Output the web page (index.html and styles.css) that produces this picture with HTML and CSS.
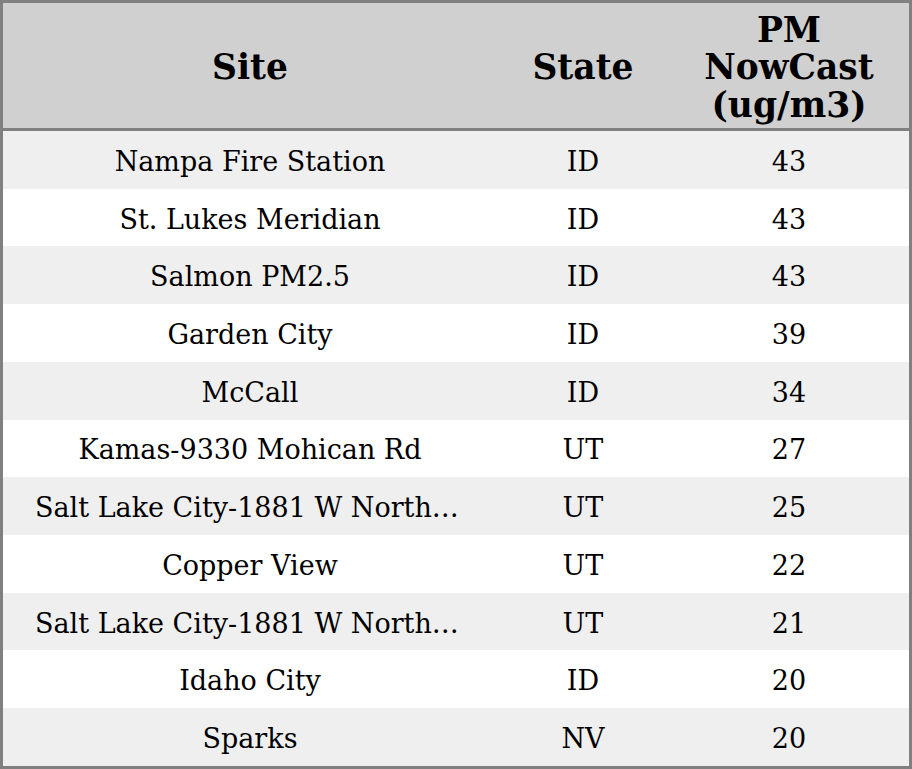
FILE: index.html
```html
<!DOCTYPE html>
<html>
<head>
<meta charset="utf-8">
<link rel="stylesheet" href="styles.css">
</head>
<body>
<div class="frame">
<table class="grid">
<colgroup><col class="c-site"><col class="c-state"><col class="c-pm"></colgroup>
<thead>
<tr><th>Site</th><th>State</th><th>PM NowCast (ug/m3)</th></tr>
</thead>
<tbody>
<tr><td>Nampa Fire Station</td><td>ID</td><td>43</td></tr>
<tr><td>St. Lukes Meridian</td><td>ID</td><td>43</td></tr>
<tr><td>Salmon PM2.5</td><td>ID</td><td>43</td></tr>
<tr><td>Garden City</td><td>ID</td><td>39</td></tr>
<tr><td>McCall</td><td>ID</td><td>34</td></tr>
<tr><td>Kamas-9330 Mohican Rd</td><td>UT</td><td>27</td></tr>
<tr><td>Salt Lake City-1881 W Northtemple</td><td>UT</td><td>25</td></tr>
<tr><td>Copper View</td><td>UT</td><td>22</td></tr>
<tr><td>Salt Lake City-1881 W Northtemple</td><td>UT</td><td>21</td></tr>
<tr><td>Idaho City</td><td>ID</td><td>20</td></tr>
<tr><td>Sparks</td><td>NV</td><td>20</td></tr>
</tbody>
</table>
</div>
</body>
</html>
```

FILE: styles.css
```css
html, body {
  margin: 0;
  padding: 0;
  background: #ffffff;
}
.frame {
  width: 912px;
  height: 769px;
  box-sizing: border-box;
  border: 3px solid #808080;
  overflow: hidden;
}
.grid {
  width: 906px;
  table-layout: fixed;
  border-collapse: separate;
  border-spacing: 0;
  font-family: "DejaVu Serif", serif;
  color: #000;
}
.c-site { width: 494px; }
.c-state { width: 172px; }
.c-pm { width: 240px; }
.grid th {
  background: #d0d0d0;
  font-weight: bold;
  font-size: 34.5px;
  line-height: 37.5px;
  height: 128px;
  padding: 5px 32px 0;
  box-sizing: border-box;
  border-bottom: 3px solid #808080;
  text-align: center;
  vertical-align: middle;
}
.grid td {
  font-size: 27px;
  height: 57.73px;
  padding: 3px 32px 0;
  box-sizing: border-box;
  text-align: center;
  vertical-align: middle;
  white-space: nowrap;
  overflow: hidden;
  text-overflow: ellipsis;
}
.grid tbody tr:nth-child(odd) td {
  background: #efefef;
}
```
